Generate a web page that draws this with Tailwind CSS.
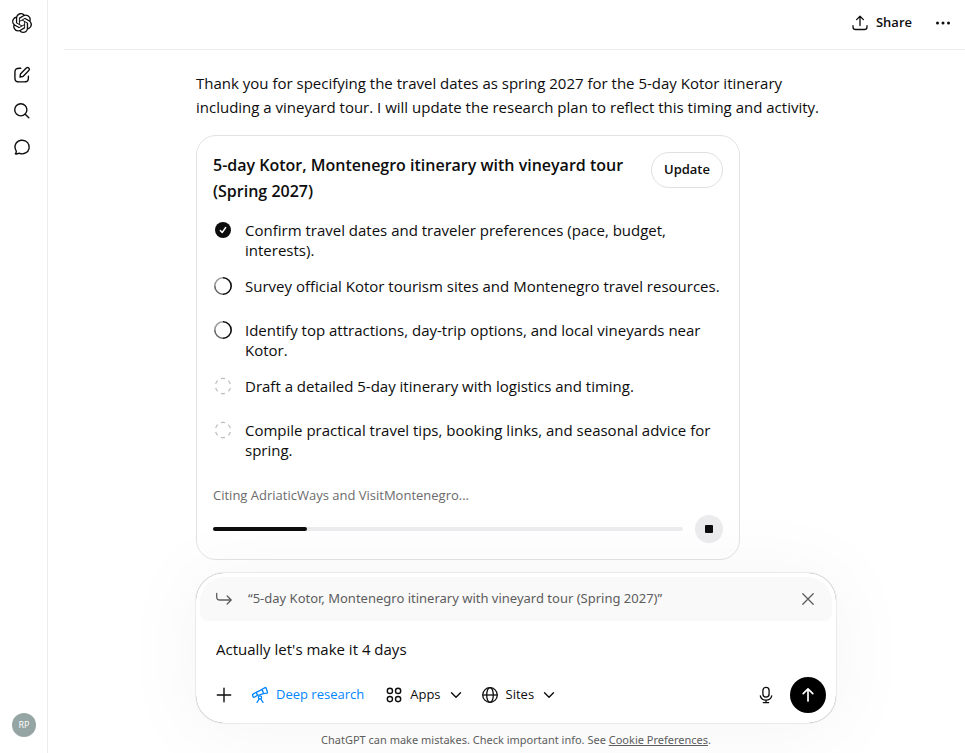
<!DOCTYPE html>
<html lang="en">
<head>
    <meta charset="UTF-8">
    <meta name="viewport" content="width=device-width, initial-scale=1.0">
    <title>ChatGPT</title>
    <script src="https://cdn.jsdelivr.net/npm/@tailwindcss/browser@4"></script>
</head>
<body class="flex min-h-screen bg-white font-['Open_Sans',sans-serif] text-[15px] text-[#0d0d0d]">
    <!-- Sidebar -->
    <nav class="flex w-12 shrink-0 flex-col items-start border-r border-[#ededed] px-3 pb-4" aria-label="Sidebar">
        <a href="#" class="mt-3 flex h-[22px] w-5 items-center justify-center" aria-label="Home">
            <svg class="size-5" viewBox="0 0 24 24" fill="currentColor"><path d="M22.2819 9.8211a5.9847 5.9847 0 0 0-.5157-4.9108 6.0462 6.0462 0 0 0-6.5098-2.9A6.0651 6.0651 0 0 0 4.9807 4.1818a5.9847 5.9847 0 0 0-3.9977 2.9 6.0462 6.0462 0 0 0 .7427 7.0966 5.98 5.98 0 0 0 .511 4.9107 6.051 6.051 0 0 0 6.5146 2.9001A5.9847 5.9847 0 0 0 13.2599 24a6.0557 6.0557 0 0 0 5.7718-4.2058 5.9894 5.9894 0 0 0 3.9977-2.9001 6.0557 6.0557 0 0 0-.7475-7.0729zm-9.022 12.6081a4.4755 4.4755 0 0 1-2.8764-1.0408l.1419-.0804 4.7783-2.7582a.7948.7948 0 0 0 .3927-.6813v-6.7369l2.02 1.1686a.071.071 0 0 1 .038.052v5.5826a4.504 4.504 0 0 1-4.4945 4.4944zm-9.6607-4.1254a4.4708 4.4708 0 0 1-.5346-3.0137l.142.0852 4.783 2.7582a.7712.7712 0 0 0 .7806 0l5.8428-3.3685v2.3324a.0804.0804 0 0 1-.0332.0615L9.74 19.9502a4.4992 4.4992 0 0 1-6.1408-1.6464zM2.3408 7.8956a4.485 4.485 0 0 1 2.3655-1.9728V11.6a.7664.7664 0 0 0 .3879.6765l5.8144 3.3543-2.0201 1.1685a.0757.0757 0 0 1-.071 0l-4.8303-2.7865A4.504 4.504 0 0 1 2.3408 7.872zm16.5963 3.8558L13.1038 8.364 15.1192 7.2a.0757.0757 0 0 1 .071 0l4.8303 2.7913a4.4944 4.4944 0 0 1-.6765 8.1042v-5.6772a.79.79 0 0 0-.407-.667zm2.0107-3.0231l-.142-.0852-4.7735-2.7818a.7759.7759 0 0 0-.7854 0L9.409 9.2297V6.8974a.0662.0662 0 0 1 .0284-.0615l4.8303-2.7866a4.4992 4.4992 0 0 1 6.6802 4.66zM8.3065 12.863l-2.02-1.1638a.0804.0804 0 0 1-.038-.0567V6.0742a4.4992 4.4992 0 0 1 7.3757-3.4537l-.142.0805L8.704 5.459a.7948.7948 0 0 0-.3927.6813zm1.0976-2.3654l2.602-1.4998 2.6069 1.4998v2.9994l-2.5974 1.4997-2.6067-1.4997Z"/></svg>
        </a>
        <div class="mt-[31px] flex flex-col gap-4">
            <button class="size-5" aria-label="New chat">
                <svg class="size-5" viewBox="0 0 20 20" fill="none" stroke="currentColor" stroke-width="1.4" stroke-linecap="round" stroke-linejoin="round"><path d="M8.8 3.3H7.2c-1.5 0-2.2.1-2.8.5-.4.2-.8.6-1 1-.4.6-.5 1.4-.5 2.9v4.9c0 1.5.1 2.2.5 2.8.2.4.6.8 1 1 .6.4 1.3.5 2.8.5h4.9c1.5 0 2.2-.1 2.8-.5.4-.2.8-.6 1-1 .4-.6.5-1.3.5-2.8v-1.5M8 12l.4-2.6c.1-.4.2-.7.5-1l5.4-5.3a1.75 1.75 0 0 1 2.5 2.5l-5.3 5.4c-.3.3-.6.4-1 .5L8 12Z"/></svg>
            </button>
            <button class="size-5" aria-label="Search chats">
                <svg class="size-5" viewBox="0 0 20 20" fill="none" stroke="currentColor" stroke-width="1.4" stroke-linecap="round"><circle cx="8.8" cy="8.8" r="6.1"/><path d="m13.2 13.2 3.6 3.6"/></svg>
            </button>
            <button class="size-5" aria-label="Chats">
                <svg class="size-5" viewBox="0 0 20 20" fill="none" stroke="currentColor" stroke-width="1.4" stroke-linejoin="round"><path d="M10.2 3.2a7 6.8 0 1 1-2.6 13.1c-.4-.1-.6-.1-1 .1-1 .5-2 .6-3.3.5.7-.8 1-1.5 1-2.3 0-.4-.1-.7-.3-1.1A6.8 6.8 0 0 1 10.2 3.2Z"/></svg>
            </button>
        </div>
        <button class="mt-auto flex size-6 items-center justify-center rounded-full bg-[#95a5a3] text-[9px] text-white" aria-label="Account">RP</button>
    </nav>

    <div class="flex min-w-0 flex-1 flex-col">
        <header class="ml-4 flex h-[50px] shrink-0 items-center justify-end border-b border-[#ededed] pr-3 pb-[3px]">
            <button class="flex items-center gap-2 text-[13px] font-semibold">
                <svg class="size-4" viewBox="0 0 16 16" fill="none" stroke="currentColor" stroke-width="1.3" stroke-linecap="round" stroke-linejoin="round"><path d="M8 10.5V1.5M4.6 4.6 8 1.2l3.4 3.4M1 10.7v1.2c0 1.7.9 2.6 2.6 2.6h8.8c1.7 0 2.6-.9 2.6-2.6v-1.2"/></svg>
                Share
            </button>
            <button class="ml-[21px] size-5" aria-label="More options">
                <svg class="size-5" viewBox="0 0 20 20" fill="currentColor"><circle cx="4.5" cy="10" r="1.5"/><circle cx="10" cy="10" r="1.5"/><circle cx="15.5" cy="10" r="1.5"/></svg>
            </button>
        </header>

        <main class="flex flex-1 flex-col pl-[19px]">
            <div class="mx-auto flex w-full max-w-[640px] flex-1 flex-col">
                <p class="pt-[21px] leading-6">Thank you for specifying the travel dates as spring 2027 for the 5-day Kotor itinerary including a vineyard tour. I will update the research plan to reflect this timing and activity.</p>

                <!-- Research plan -->
                <section class="mt-4 w-full max-w-[544px] rounded-[20px] border border-[#e3e3e3] p-4">
                    <div class="flex items-start justify-between gap-4">
                        <h2 class="text-[16px] leading-[26px] font-semibold">5-day Kotor, Montenegro itinerary with vineyard tour (Spring 2027)</h2>
                        <button class="h-9 w-[72px] shrink-0 rounded-full border border-[#e0e0e0] text-[13px] font-semibold">Update</button>
                    </div>
                    <ul class="mt-4 flex flex-col gap-4 leading-5">
                        <li class="flex min-h-7 items-start gap-3">
                            <svg class="size-5 shrink-0" viewBox="0 0 20 20" fill="none"><circle cx="10" cy="10" r="8" fill="#0d0d0d"/><path d="m7.3 10.5 1.9 2 3.5-5" stroke="#fff" stroke-width="1.4" stroke-linecap="round" stroke-linejoin="round"/></svg>
                            Confirm travel dates and traveler preferences (pace, budget, interests).
                        </li>
                        <li class="flex min-h-7 items-start gap-3">
                            <svg class="size-5 shrink-0" viewBox="0 0 20 20" fill="none" stroke-width="1.6"><path d="M10 18.2A8.2 8.2 0 0 1 1.8 10" stroke="#666"/><path d="M1.8 10A8.2 8.2 0 0 1 10 1.8" stroke="#999"/><path d="M10 1.8a8.2 8.2 0 0 1 0 16.4" stroke="#0d0d0d"/></svg>
                            Survey official Kotor tourism sites and Montenegro travel resources.
                        </li>
                        <li class="flex min-h-7 items-start gap-3">
                            <svg class="size-5 shrink-0" viewBox="0 0 20 20" fill="none" stroke-width="1.6"><path d="M10 18.2A8.2 8.2 0 0 1 1.8 10" stroke="#666"/><path d="M1.8 10A8.2 8.2 0 0 1 10 1.8" stroke="#999"/><path d="M10 1.8a8.2 8.2 0 0 1 0 16.4" stroke="#0d0d0d"/></svg>
                            Identify top attractions, day-trip options, and local vineyards near Kotor.
                        </li>
                        <li class="flex min-h-7 items-start gap-3">
                            <svg class="size-5 shrink-0" viewBox="0 0 20 20" fill="none" stroke="#bdbdbd" stroke-width="1.2"><circle cx="10" cy="10" r="7.6" pathLength="60" stroke-dasharray="5 5" stroke-dashoffset="-2.5" transform="rotate(-60 10 10)"/></svg>
                            Draft a detailed 5-day itinerary with logistics and timing.
                        </li>
                        <li class="flex min-h-7 items-start gap-3">
                            <svg class="size-5 shrink-0" viewBox="0 0 20 20" fill="none" stroke="#bdbdbd" stroke-width="1.2"><circle cx="10" cy="10" r="7.6" pathLength="60" stroke-dasharray="5 5" stroke-dashoffset="-2.5" transform="rotate(-60 10 10)"/></svg>
                            Compile practical travel tips, booking links, and seasonal advice for spring.
                        </li>
                    </ul>
                    <p class="mt-[25px] text-[13px] leading-5 text-[#6b6b6b]">Citing AdriaticWays and VisitMontenegro...</p>
                    <div class="mt-[10px] flex items-center gap-3">
                        <div class="h-1 flex-1 rounded-full bg-[#ececee]" role="progressbar" aria-label="Research progress" aria-valuenow="20">
                            <div class="h-1 rounded-full bg-[#0d0d0d]" style="width: 20%"></div>
                        </div>
                        <button class="flex size-7 items-center justify-center rounded-full bg-[#ececee]" aria-label="Stop">
                            <span class="size-2 rounded-[1px] bg-[#0d0d0d]"></span>
                        </button>
                    </div>
                </section>

                <!-- Composer -->
                <form class="relative mt-auto rounded-[28px] bg-white px-1 pt-1 pb-[10px] shadow-[0_4px_80px_8px_rgba(0,0,0,0.04),0_0_1px_rgba(0,0,0,0.62)]">
                    <div class="flex h-11 items-center rounded-t-3xl rounded-b-lg bg-[#f9f9f9] px-4 text-[#5d5d5d]">
                        <svg class="size-4 shrink-0" viewBox="0 0 16 16" fill="none" stroke="currentColor" stroke-width="1.3" stroke-linecap="round" stroke-linejoin="round"><path d="M.7 2.3v3.4c0 2 1.3 3.3 3.3 3.3h11M11.2 5 15.2 9l-4 4"/></svg>
                        <span class="ml-4 flex-1 font-['Noto_Sans',sans-serif] text-[13px]">“5-day Kotor, Montenegro itinerary with vineyard tour (Spring 2027)”</span>
                        <button type="button" class="size-4" aria-label="Remove quote">
                            <svg class="size-4" viewBox="0 0 16 16" fill="none" stroke="currentColor" stroke-width="1.3" stroke-linecap="round"><path d="m2.8 2.8 10.4 10.4M13.2 2.8 2.8 13.2"/></svg>
                        </button>
                    </div>
                    <input type="text" class="mt-4 block h-6 w-full px-4 outline-none" aria-label="Message" value="Actually let's make it 4 days">
                    <div class="mt-4 flex h-9 items-center pr-[6px] pl-[14px] text-[13px]">
                        <button type="button" class="size-5" aria-label="Add files">
                            <svg class="size-5" viewBox="0 0 20 20" fill="none" stroke="currentColor" stroke-width="1.4" stroke-linecap="round"><path d="M10 3.3v13.4M3.3 10h13.4"/></svg>
                        </button>
                        <button type="button" class="ml-4 flex items-center gap-[6px] text-[#0285ff]">
                            <svg class="size-5" viewBox="0 0 20 20" fill="none" stroke="currentColor" stroke-width="1.3" stroke-linecap="round" stroke-linejoin="round"><path d="m12.1 4.3 3-1.7c.4-.2.8 0 1 .4l1.4 4.2c.1.4-.1.8-.5.9l-3.4.6-1.5-4.4ZM12.1 4.3 6.3 7.3l1.100 3.200 6.200-1.800M6.300 7.300 3.300 8.900c-.6.3-.9.8-.7 1.400l.4 1.200c.2.6.7.8 1.300.7l3.100-1.700"/><circle cx="10" cy="12.500" r="1.600"/><path d="m9.200 14-2.200 3.400M10.800 14l2.200 3.400"/></svg>
                            Deep research
                        </button>
                        <button type="button" class="ml-5 flex items-center gap-[6px]">
                            <svg class="size-5" viewBox="0 0 20 20" fill="none" stroke="currentColor" stroke-width="1.4"><circle cx="5.9" cy="5.9" r="2.6"/><circle cx="14.1" cy="5.9" r="2.6"/><circle cx="5.9" cy="14.1" r="2.6"/><circle cx="14.1" cy="14.1" r="2.6"/></svg>
                            Apps
                            <svg class="ml-px size-4" viewBox="0 0 16 16" fill="none" stroke="currentColor" stroke-width="1.4" stroke-linecap="round" stroke-linejoin="round"><path d="m3.500 5.800 4.500 4.500 4.500-4.500"/></svg>
                        </button>
                        <button type="button" class="ml-4 flex items-center gap-[6px]">
                            <svg class="size-5" viewBox="0 0 20 20" fill="none" stroke="currentColor" stroke-width="1.3"><circle cx="10" cy="10" r="7.3"/><ellipse cx="10" cy="10" rx="3.3" ry="7.3"/><path d="M2.7 10h14.6"/></svg>
                            Sites
                            <svg class="ml-px size-4" viewBox="0 0 16 16" fill="none" stroke="currentColor" stroke-width="1.4" stroke-linecap="round" stroke-linejoin="round"><path d="m3.500 5.800 4.500 4.500 4.500-4.500"/></svg>
                        </button>
                        <button type="button" class="ml-auto size-5" aria-label="Dictate">
                            <svg class="size-5" viewBox="0 0 20 20" fill="none" stroke="currentColor" stroke-width="1.3" stroke-linecap="round"><rect x="6.9" y="2.3" width="6.2" height="9.9" rx="3.1"/><path d="M4.3 10.8c.6 2.7 2.9 4.3 5.700 4.300s5.100-1.600 5.700-4.300M10 15.100v2.500M7.300 17.600h5.400"/></svg>
                        </button>
                        <button type="submit" class="ml-[14px] flex size-9 items-center justify-center rounded-full bg-black text-white" aria-label="Send">
                            <svg class="size-5" viewBox="0 0 20 20" fill="none" stroke="currentColor" stroke-width="1.7" stroke-linecap="round" stroke-linejoin="round"><path d="M10 16V4M5.200 8.700 10 3.900l4.800 4.800"/></svg>
                        </button>
                    </div>
                </form>
                <p class="relative pt-[7px] pb-[3px] text-center font-['Noto_Sans',sans-serif] text-[11px] leading-5 text-[#5d5d5d]">ChatGPT can make mistakes. Check important info. See <a href="#" class="underline">Cookie Preferences</a>.</p>
            </div>
        </main>
    </div>
</body>
</html>
